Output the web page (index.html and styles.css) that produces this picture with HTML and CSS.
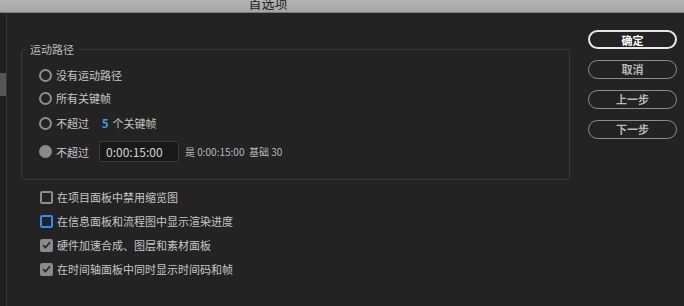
FILE: index.html
```html
<!DOCTYPE html>
<html lang="zh-CN">
<head>
    <meta charset="UTF-8">
    <title>首选项</title>
    <link rel="stylesheet" href="styles.css">
</head>
<body>
    <div class="titlebar">
        <span class="title">首选项</span>
    </div>

    <div class="window">
        <div class="sidebar">
            <div class="thumb"></div>
        </div>

        <div class="content">
            <fieldset class="group">
                <legend>运动路径</legend>
                <div class="options">
                    <div class="row row1">
                        <span class="radio"></span>
                        <span>没有运动路径</span>
                    </div>
                    <div class="row row2">
                        <span class="radio"></span>
                        <span>所有关键帧</span>
                    </div>
                    <div class="row row3">
                        <span class="radio"></span>
                        <span>不超过</span>
                        <span class="num">5</span>
                        <span>个关键帧</span>
                    </div>
                    <div class="row row4">
                        <span class="radio filled"></span>
                        <span>不超过</span>
                        <span class="timebox">0:00:15:00</span>
                        <span class="note">是 0:00:15:00&nbsp; 基础 30</span>
                    </div>
                </div>
            </fieldset>

            <div class="checks">
                <div class="check-row">
                    <span class="box"></span>
                    <span>在项目面板中禁用缩览图</span>
                </div>
                <div class="check-row">
                    <span class="box focus"></span>
                    <span>在信息面板和流程图中显示渲染进度</span>
                </div>
                <div class="check-row">
                    <span class="box checked">
                        <svg width="9" height="8" viewBox="0 0 9 8"><path d="M1 4.2 L3.4 6.5 L8 1.2" fill="none" stroke="#262626" stroke-width="1.6"/></svg>
                    </span>
                    <span>硬件加速合成、图层和素材面板</span>
                </div>
                <div class="check-row">
                    <span class="box checked">
                        <svg width="9" height="8" viewBox="0 0 9 8"><path d="M1 4.2 L3.4 6.5 L8 1.2" fill="none" stroke="#262626" stroke-width="1.6"/></svg>
                    </span>
                    <span>在时间轴面板中同时显示时间码和帧</span>
                </div>
            </div>
        </div>

        <div class="actions">
            <button class="btn primary">确定</button>
            <button class="btn">取消</button>
            <button class="btn">上一步</button>
            <button class="btn">下一步</button>
        </div>
    </div>
</body>
</html>
```

FILE: styles.css
```css
body {
    margin: 0;
    background-color: #232323;
    color: #c6c6c6;
    font-family: "Noto Sans CJK SC", "Noto Sans", sans-serif;
    font-size: 11px;
    width: 684px;
    height: 306px;
    overflow: hidden;
}

/* 标题栏 */
.titlebar {
    height: 13px;
    overflow: hidden;
    background: linear-gradient(#b4b4b4, #a6a6a6);
    border-bottom: 1px solid #7a7a7a;
    box-sizing: border-box;
    text-align: center;
    padding-right: 148px;
}

.title {
    display: block;
    font-size: 13px;
    line-height: 13px;
    margin-top: -4px;
    color: #1c1c1c;
}

.window {
    display: flex;
    height: 293px;
}

/* 左侧列表 */
.sidebar {
    width: 6px;
    background-color: #1f1f1f;
    border-right: 1px solid #343434;
    padding-top: 60px;
}

.thumb {
    width: 6px;
    height: 23px;
    background-color: #565656;
}

.content {
    width: 567px;
    padding-left: 14px;
    padding-top: 30px;
    box-sizing: border-box;
}

/* 运动路径 */
.group {
    width: 549px;
    box-sizing: border-box;
    margin: 0;
    padding: 0 0 17px 4px;
    border: 1px solid #393939;
    border-radius: 3px;
}

.group legend {
    padding: 0 4px;
    line-height: 12px;
    color: #bcbcbc;
}

.options {
    padding-left: 13px;
}

.row {
    display: flex;
    align-items: center;
    height: 20px;
}

.row1 { margin-top: 10px; }
.row2 { margin-top: 3px; }
.row3 { margin-top: 5px; }
.row4 { margin-top: 8px; height: 21px; }

.radio {
    width: 13px;
    height: 13px;
    box-sizing: border-box;
    border: 2px solid #8e8e8e;
    border-radius: 50%;
    margin-right: 4px;
}

.radio.filled {
    background-color: #8a8a8a;
    border-color: #8a8a8a;
}

.num {
    color: #3f9ff0;
    font-weight: bold;
    margin-left: 13px;
    margin-right: 4px;
}

.timebox {
    width: 80px;
    height: 21px;
    box-sizing: border-box;
    margin-left: 10px;
    padding-left: 6px;
    background-color: #191919;
    border: 1px solid #3a3a3a;
    border-radius: 2px;
    font-size: 12px;
    line-height: 19px;
    color: #d2d2d2;
}

.note {
    margin-left: 6px;
    font-size: 10px;
    color: #b8b8b8;
}

/* 复选框 */
.checks {
    padding-left: 19px;
    padding-top: 7px;
}

.check-row {
    display: flex;
    align-items: center;
    height: 20px;
    margin-bottom: 4px;
}

.box {
    width: 13px;
    height: 13px;
    box-sizing: border-box;
    border: 2px solid #8a8a8a;
    border-radius: 2px;
    margin-right: 4px;
    display: flex;
    align-items: center;
    justify-content: center;
}

.box.focus {
    border-color: #2f8ff0;
}

.box.checked {
    background-color: #8a8a8a;
}

/* 按钮 */
.actions {
    display: flex;
    flex-direction: column;
    gap: 11px;
    padding-top: 17px;
    margin-left: 14px;
}

.btn {
    width: 89px;
    height: 19px;
    padding: 0;
    background: transparent;
    border: 1px solid #8c8c8c;
    border-radius: 10px;
    color: #b9b9b9;
    font-family: "Noto Sans CJK SC", sans-serif;
    font-size: 11px;
    font-weight: bold;
    line-height: 17px;
}

.btn.primary {
    border: 2px solid #e6e6e6;
    color: #ffffff;
}
```
